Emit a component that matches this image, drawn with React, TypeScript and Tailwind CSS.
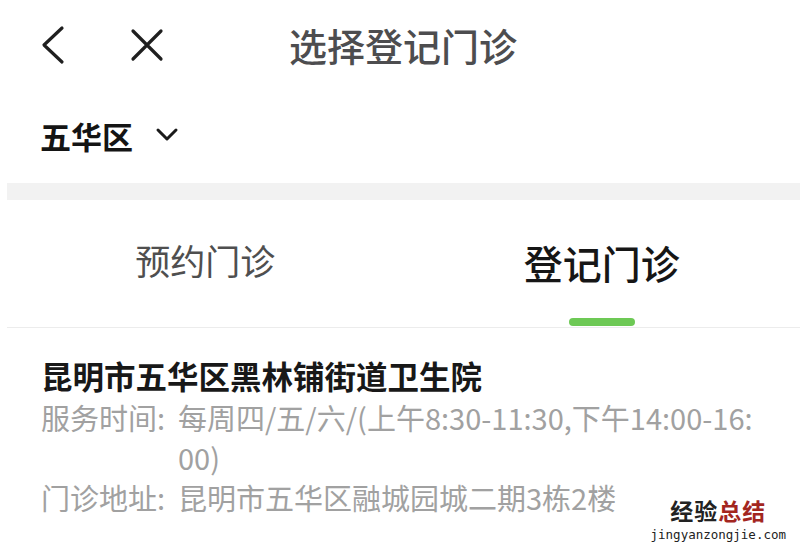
import React from "react";

const FONT = { fontFamily: '"Noto Sans CJK SC", "Noto Sans", sans-serif' };

const BackIcon = () => (
  <svg width="26" height="40" viewBox="0 0 26 40" fill="none">
    <polyline points="22,3 4,20 22,37" stroke="#1f1f1f" strokeWidth="3.2" strokeLinecap="round" strokeLinejoin="round" />
  </svg>
);

const CloseIcon = () => (
  <svg width="34" height="34" viewBox="0 0 34 34" fill="none">
    <path d="M3 3 L31 31 M31 3 L3 31" stroke="#1f1f1f" strokeWidth="3.2" strokeLinecap="round" />
  </svg>
);

const ChevronDown = () => (
  <svg width="24" height="16" viewBox="0 0 24 16" fill="none">
    <polyline points="3,3 12,12 21,3" stroke="#1a1a1a" strokeWidth="3" strokeLinecap="round" strokeLinejoin="round" />
  </svg>
);

const tabs = [
  { label: "预约门诊", active: false },
  { label: "登记门诊", active: true },
];

const App = () => {
  return (
    <div className="relative w-[800px] h-[547px] overflow-hidden bg-white" style={FONT}>
      {/* header */}
      <div className="h-[90px] grid grid-cols-[1fr_auto_1fr] items-center">
        <div className="flex items-center pl-[40px] gap-[64px]">
          <BackIcon />
          <CloseIcon />
        </div>
        <h1 className="text-[38px] leading-none text-[#4d4d4f] font-medium pl-[6px]">选择登记门诊</h1>
        <div />
      </div>

      {/* district */}
      <div className="h-[90px] flex items-center pl-[40px] gap-[22px]">
        <span className="text-[31px] leading-none font-bold text-[#141414]">五华区</span>
        <ChevronDown />
      </div>

      <div className="ml-[7px] mt-[3px] h-[17px] bg-[#f2f2f2]" />

      {/* tabs */}
      <div className="ml-[7px] h-[128px] flex border-b border-[#ececec]">
        {tabs.map((tab) => (
          <div key={tab.label} className="flex-1 flex flex-col items-center">
            {tab.active ? (
              <span className="pt-[43px] text-[39px] leading-none font-medium text-[#161616]">{tab.label}</span>
            ) : (
              <span className="pt-[42px] text-[35px] leading-none text-[#4f4f4f]">{tab.label}</span>
            )}
            <div className={`mt-auto mb-[1px] w-[66px] h-[8px] rounded-full ${tab.active ? "bg-[#6dc955]" : "bg-transparent"}`} />
          </div>
        ))}
      </div>

      {/* clinic */}
      <div className="pl-[41px] pt-[25px]">
        <div className="text-[31.5px] leading-[44px] font-bold text-[#181818]">昆明市五华区黑林铺街道卫生院</div>
        <div className="flex text-[29px] leading-[40px] text-[#a1a1a1]">
          <span className="w-[137px] shrink-0">服务时间:</span>
          <span>
            每周四/五/六/(上午8:30-11:30,下午14:00-16:
            <br />
            00)
          </span>
        </div>
        <div className="flex text-[29px] leading-[40px] text-[#a1a1a1]">
          <span className="w-[137px] shrink-0">门诊地址:</span>
          <span>昆明市五华区融城园城二期3栋2楼</span>
        </div>
      </div>

      {/* watermark */}
      <div className="absolute right-[14px] bottom-[6px] flex flex-col items-center">
        <div className="text-[23px] leading-none font-bold tracking-[1px]">
          <span className="text-[#222]">经验</span>
          <span className="text-[#a3261f]">总结</span>
        </div>
        <div className="mt-[7px] text-[12.5px] leading-none text-[#222]" style={{ fontFamily: '"DejaVu Sans Mono", monospace' }}>
          jingyanzongjie.com
        </div>
      </div>
    </div>
  );
};

export default App;
